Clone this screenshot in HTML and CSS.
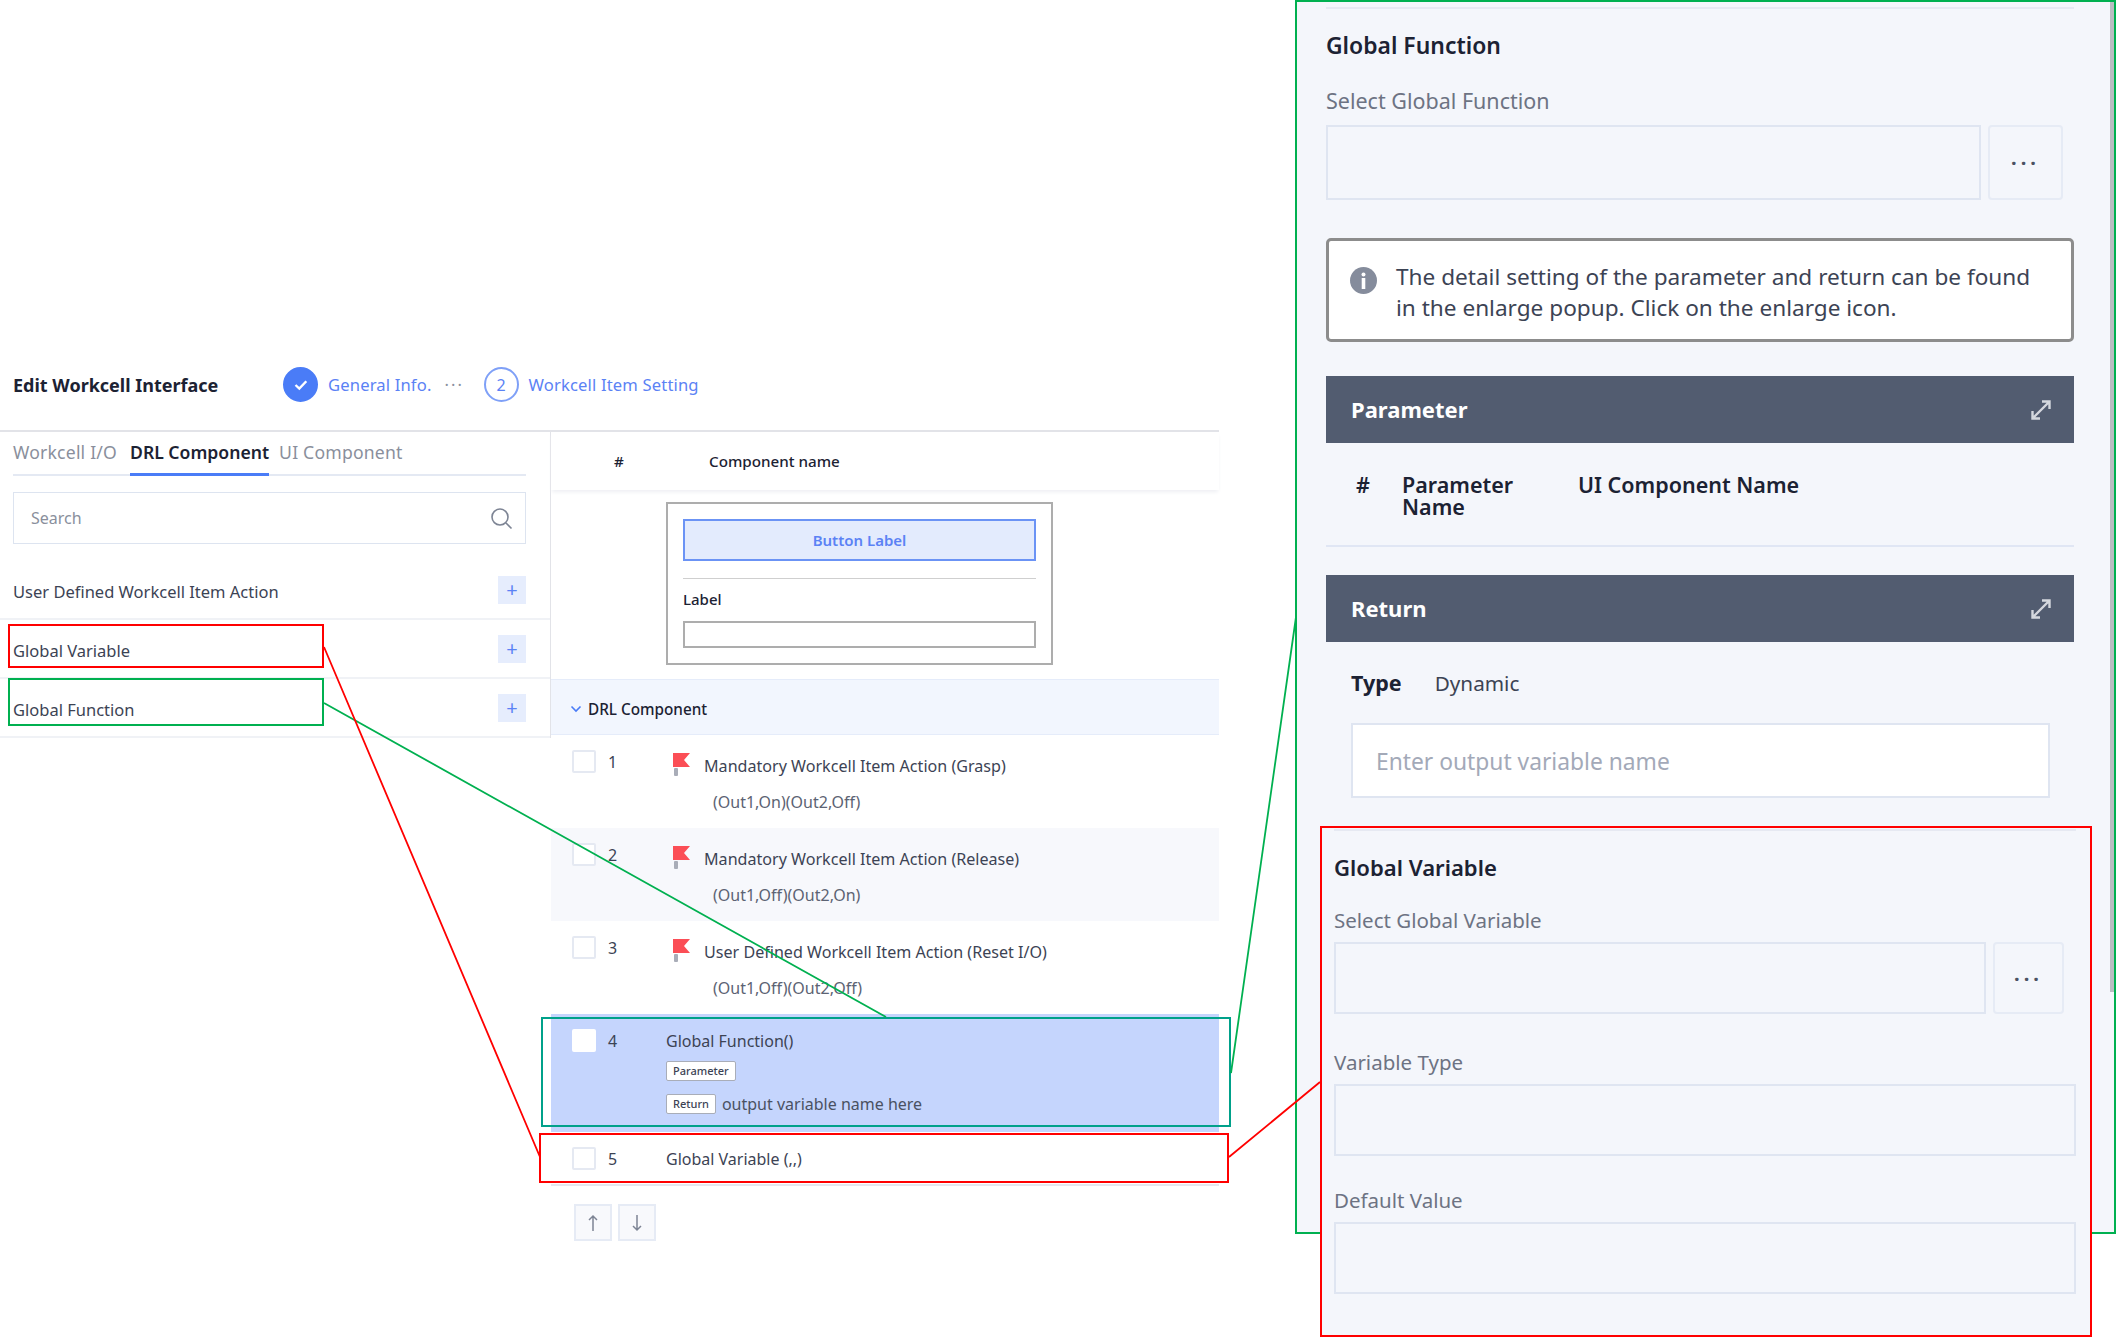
FILE: index.html
```html
<!DOCTYPE html>
<html lang="en">
<head>
  <meta charset="UTF-8">
  <title>Edit Workcell Interface</title>
  <link rel="stylesheet" href="styles.css">
</head>
<body>
  <div class="canvas">
    <div class="app">
      <header class="app-head">
        <h1>Edit Workcell Interface</h1>
        <div class="steps">
          <span class="step-dot done">
            <svg width="16" height="12" viewBox="0 0 16 12"><path d="M2.5 6l3.8 3.6 7-7.4" fill="none" stroke="#fff" stroke-width="2.4"/></svg>
          </span>
          <span class="step-label">General Info.</span>
          <span class="step-more">···</span>
          <span class="step-dot">2</span>
          <span class="step-label">Workcell Item Setting</span>
        </div>
      </header>

      <div class="app-body">
        <aside class="sidebar">
          <div class="tabs">
            <span class="tab">Workcell I/O</span>
            <span class="tab active">DRL Component</span>
            <span class="tab">UI Component</span>
          </div>
          <div class="search">
            <span>Search</span>
            <svg width="23" height="23" viewBox="0 0 23 23"><circle cx="10" cy="10" r="8" fill="none" stroke="#7d8494" stroke-width="1.6"/><path d="M16 16l5.5 5.5" stroke="#7d8494" stroke-width="1.6"/></svg>
          </div>
          <ul class="comp-list">
            <li><span>User Defined Workcell Item Action</span><button class="plus">+</button></li>
            <li><span>Global Variable</span><button class="plus">+</button></li>
            <li><span>Global Function</span><button class="plus">+</button></li>
          </ul>
        </aside>

        <main class="table">
          <div class="table-head"><span class="head-num">#</span><span>Component name</span></div>

          <div class="ui-box">
            <div class="ui-button">Button Label</div>
            <div class="ui-rule"></div>
            <div class="ui-label">Label</div>
            <div class="ui-input"></div>
          </div>

          <div class="group">
            <svg width="12" height="8" viewBox="0 0 12 8"><path d="M1.5 1.5L6 6l4.5-4.5" fill="none" stroke="#4a7cf7" stroke-width="1.6"/></svg>
            <span>DRL Component</span>
          </div>

          <div class="row">
            <span class="check"></span>
            <span class="num">1</span>
            <div>
              <div class="flagged">
                <svg class="flag" width="18" height="24" viewBox="0 0 18 24"><rect x="1" y="15" width="4" height="8" rx="1" fill="#a9adb8"/><path d="M0 0h17l-6 7 6 7H0z" fill="#fb4e56"/></svg>
                <span>Mandatory Workcell Item Action (Grasp)</span>
              </div>
              <div class="sub">(Out1,On)(Out2,Off)</div>
            </div>
          </div>
          <div class="row alt">
            <span class="check"></span>
            <span class="num">2</span>
            <div>
              <div class="flagged">
                <svg class="flag" width="18" height="24" viewBox="0 0 18 24"><rect x="1" y="15" width="4" height="8" rx="1" fill="#a9adb8"/><path d="M0 0h17l-6 7 6 7H0z" fill="#fb4e56"/></svg>
                <span>Mandatory Workcell Item Action (Release)</span>
              </div>
              <div class="sub">(Out1,Off)(Out2,On)</div>
            </div>
          </div>
          <div class="row">
            <span class="check"></span>
            <span class="num">3</span>
            <div>
              <div class="flagged">
                <svg class="flag" width="18" height="24" viewBox="0 0 18 24"><rect x="1" y="15" width="4" height="8" rx="1" fill="#a9adb8"/><path d="M0 0h17l-6 7 6 7H0z" fill="#fb4e56"/></svg>
                <span>User Defined Workcell Item Action (Reset I/O)</span>
              </div>
              <div class="sub">(Out1,Off)(Out2,Off)</div>
            </div>
          </div>
          <div class="row selected">
            <span class="check"></span>
            <span class="num">4</span>
            <div>
              <div class="fn-name">Global Function()</div>
              <div class="fn-line"><span class="badge">Parameter</span></div>
              <div class="fn-line"><span class="badge">Return</span><span class="fn-note">output variable name here</span></div>
            </div>
          </div>
          <div class="row last">
            <span class="check"></span>
            <span class="num">5</span>
            <div class="fn-name">Global Variable (,,)</div>
          </div>

          <div class="move">
            <button><svg width="12" height="18" viewBox="0 0 12 18"><path d="M6 17V2M2 6l4-4 4 4" fill="none" stroke="#7d8494" stroke-width="1.5"/></svg></button>
            <button><svg width="12" height="18" viewBox="0 0 12 18"><path d="M6 1v15M2 12l4 4 4-4" fill="none" stroke="#7d8494" stroke-width="1.5"/></svg></button>
          </div>
        </main>
      </div>
    </div>

    <section class="panel fn-panel">
      <div class="panel-top"></div>
      <h2>Global Function</h2>
      <div class="field-label first">Select Global Function</div>
      <div class="picker">
        <div class="box"></div>
        <button class="more">···</button>
      </div>

      <div class="notice">
        <svg width="27" height="27" viewBox="0 0 27 27"><circle cx="13.5" cy="13.5" r="13.5" fill="#858c9c"/><circle cx="13.5" cy="7.5" r="2" fill="#fff"/><rect x="11.7" y="11" width="3.6" height="11" fill="#fff"/></svg>
        <p>The detail setting of the parameter and return can be found in the enlarge popup. Click on the enlarge icon.</p>
      </div>

      <div class="bar">
        <span>Parameter</span>
        <svg width="22" height="22" viewBox="0 0 22 22"><path d="M3 19L19 3M12 2.5h7.5V10M2.5 12v7.5H10" fill="none" stroke="#d5d8de" stroke-width="2.4"/></svg>
      </div>
      <div class="param-head">
        <span class="param-num">#</span>
        <span class="param-name">Parameter Name</span>
        <span>UI Component Name</span>
      </div>

      <div class="bar">
        <span>Return</span>
        <svg width="22" height="22" viewBox="0 0 22 22"><path d="M3 19L19 3M12 2.5h7.5V10M2.5 12v7.5H10" fill="none" stroke="#d5d8de" stroke-width="2.4"/></svg>
      </div>
      <div class="return-type"><b>Type</b><span>Dynamic</span></div>
      <div class="return-input">Enter output variable name</div>

      <div class="scroll-thumb"></div>
    </section>

    <section class="panel var-panel">
      <div class="panel-top"></div>
      <h2>Global Variable</h2>
      <div class="field-label first">Select Global Variable</div>
      <div class="picker">
        <div class="box"></div>
        <button class="more">···</button>
      </div>
      <div class="field-label">Variable Type</div>
      <div class="box"></div>
      <div class="field-label tight">Default Value</div>
      <div class="box"></div>
    </section>

    <!-- callouts drawn over the screenshot -->
    <div class="mark red" style="left:8px;top:624px;width:316px;height:44px"></div>
    <div class="mark green" style="left:8px;top:678px;width:316px;height:48px"></div>
    <div class="mark teal" style="left:541px;top:1017px;width:690px;height:110px"></div>
    <div class="mark red" style="left:539px;top:1133px;width:690px;height:50px"></div>
    <svg class="links" width="2117" height="1337" viewBox="0 0 2117 1337">
      <path d="M324 703L886 1017M1231 1073L1296 617" fill="none" stroke="#00b050" stroke-width="1.8"/>
      <path d="M324 647L540 1157M1229 1157L1320 1082" fill="none" stroke="#f00" stroke-width="1.8"/>
    </svg>
  </div>
</body>
</html>
```

FILE: styles.css
```css
* {
  box-sizing: border-box;
  font-family: "Noto Sans", "Noto Sans CJK KR", sans-serif;
}

body {
  margin: 0;
  background-color: white;
  color: #3c4354;
}

button {
  padding: 0;
  border: none;
  background: none;
}

.canvas {
  position: relative;
  display: flex;
  align-items: flex-start;
  width: 2117px;
  height: 1337px;
  overflow: hidden;
}

.app {
  width: 1219px;
  padding-top: 368px;
}

.app-head {
  display: flex;
  align-items: center;
  height: 64px;
  padding: 0 0 29px 13px;
  border-bottom: 2px solid #e2e3e8;

  h1 {
    width: 270px;
    margin: 0;
    font-size: 18px;
    font-weight: 700;
    color: #1c2233;
  }
}

.steps {
  display: flex;
  align-items: center;
  color: #5b82f5;
  font-size: 16.6px;
}

.step-dot {
  display: flex;
  align-items: center;
  justify-content: center;
  width: 35px;
  height: 35px;
  margin-right: 10px;
  border: 2px solid #7fa0f7;
  border-radius: 50%;
  font-size: 16px;

  &.done {
    border-color: #4a7cf7;
    background-color: #4a7cf7;
  }
}

.step-label {
  line-height: 35px;
  letter-spacing: 0.15px;
}

.step-more {
  width: 52px;
  padding-left: 13px;
  color: #8a90a0;
  letter-spacing: 2px;
}

.app-body {
  display: flex;
  align-items: flex-start;
}

.sidebar {
  width: 551px;
  border-right: 1px solid #e2e3e8;
}

.tabs {
  display: flex;
  gap: 13px;
  height: 44px;
  margin: 0 24px 0 13px;
  border-bottom: 2px solid #e4e9f3;
}

.tab {
  height: 44px;
  padding-top: 8px;
  font-size: 17.6px;
  letter-spacing: 0.2px;
  color: #8a8f9c;

  &.active {
    margin-right: -3px;
    border-bottom: 3px solid #4a7cf7;
    color: #1c2233;
    font-weight: 600;
    letter-spacing: 0;
  }
}

.search {
  display: flex;
  align-items: center;
  justify-content: space-between;
  height: 52px;
  margin: 16px 24px 17px 13px;
  padding: 0 12px 0 17px;
  border: 1px solid #dde4f0;
  color: #8a8f9c;
  font-size: 16px;
}

.comp-list {
  margin: 0;
  padding: 0;
  list-style: none;

  li {
    display: flex;
    align-items: center;
    justify-content: space-between;
    height: 59px;
    padding: 1px 24px 0 13px;
    border-bottom: 2px solid #f0f2f6;
    font-size: 16.5px;

    span {
      padding-top: 2px;
    }
  }
}

.plus {
  width: 28px;
  height: 28px;
  background-color: #e6edfd;
  color: #5b82f5;
  font-size: 20px;
  line-height: 26px;
}

.table {
  flex: 1;
}

.table-head {
  display: flex;
  align-items: center;
  height: 58px;
  box-shadow: 0 3px 4px -1px #eeeff3;
  color: #1c2233;
  font-size: 15.2px;
  font-weight: 500;
}

.head-num {
  width: 158px;
  padding-left: 63px;
}

.ui-box {
  width: 387px;
  height: 163px;
  margin: 12px 0 14px 115px;
  padding: 15px 15px 0;
  border: 2px solid #adadad;
}

.ui-button {
  height: 42px;
  border: 2px solid #6b93f5;
  background-color: #e3ebfd;
  color: #5b82f5;
  font-size: 15px;
  font-weight: 600;
  line-height: 38px;
  text-align: center;
}

.ui-rule {
  height: 1px;
  margin-top: 17px;
  background-color: #cfcfcf;
}

.ui-label {
  height: 42px;
  padding-top: 10px;
  color: #1c2233;
  font-size: 15px;
  font-weight: 500;
}

.ui-input {
  height: 27px;
  border: 2px solid #adadad;
}

.group {
  display: flex;
  align-items: center;
  gap: 6px;
  height: 56px;
  padding: 3px 0 0 19px;
  border-top: 1px solid #e5ecfa;
  border-bottom: 1px solid #e5ecfa;
  background-color: #f2f6fe;
  color: #1c2233;
  font-size: 15.3px;
  font-weight: 500;
}

.row {
  display: grid;
  grid-template-columns: 24px 70px 1fr;
  height: 93px;
  padding: 15px 0 0 21px;
  font-size: 16px;

  &.alt {
    background-color: #f7f8fc;
  }

  &.selected {
    height: 118px;
    background-color: #c5d5fd;

    .check {
      border-color: white;
      background-color: white;
    }
  }

  &.last {
    height: 54px;
    border-bottom: 2px solid #e5e7ee;
  }
}

.check {
  width: 24px;
  height: 23px;
  border: 2px solid #e5e9f2;
  border-radius: 2px;
  background-color: white;
}

.num {
  padding-left: 12px;
  line-height: 24px;
}

.flagged {
  display: flex;
  align-items: flex-start;
  padding-left: 7px;
  line-height: 24px;
  padding-top: 4px;

  span {
    margin-left: 13px;
    font-size: 16.1px;
  }
}

.flag {
  flex: none;
  margin-top: -1px;
}

.sub {
  padding-top: 12px;
  padding-left: 47px;
  line-height: 24px;
  color: #5c6373;
}

.fn-name {
  line-height: 24px;
}

.fn-line {
  display: flex;
  align-items: center;
  gap: 6px;
  height: 20px;
  margin-top: 8px;

  & + .fn-line {
    margin-top: 13px;
  }
}

.badge {
  height: 20px;
  padding: 0 6px;
  border: 1px solid #a9adb8;
  border-radius: 2px;
  background-color: white;
  font-size: 11px;
  font-weight: 500;
  line-height: 18px;
}

.fn-note {
  color: #4a5162;
}

.move {
  display: flex;
  gap: 6px;
  margin: 18px 0 0 23px;

  button {
    width: 38px;
    height: 37px;
    padding-top: 4px;
    border: 2px solid #e6ebf5;
    background-color: #f8f9fc;
  }
}

.panel {
  background-color: #f4f6fb;

  h2 {
    margin: 0;
    color: #1c2233;
    font-weight: 600;
  }
}

.panel-top {
  height: 2px;
  background-color: #e6e9f2;
}

.box {
  flex: 1;
  height: 72px;
  border: 2px solid #dfe5f1;
}

.field-label {
  color: #6d7383;
  line-height: 26px;
}

.picker {
  display: flex;
  gap: 7px;
}

.more {
  border: 2px solid #e6ebf5;
  border-radius: 4px;
  color: #4a5162;
  font-size: 20px;
  font-weight: 700;
  letter-spacing: 4px;
}

.fn-panel {
  position: relative;
  width: 821px;
  height: 1234px;
  margin-left: 76px;
  padding: 5px 40px 0 29px;
  border: 2px solid #00b050;

  h2 {
    margin-top: 23px;
    font-size: 22.9px;
    line-height: 28px;
  }

  .first {
    margin-top: 28px;
    margin-bottom: 11px;
    font-size: 21.5px;
  }

  .picker .box {
    height: 75px;
  }

  .more {
    width: 75px;
    margin-right: 11px;
  }
}

.notice {
  display: flex;
  gap: 19px;
  height: 104px;
  margin-top: 38px;
  padding: 20px 20px 0 21px;
  border: 3px solid #8c8c8c;
  border-radius: 5px;
  background-color: white;

  svg {
    flex: none;
    margin-top: 6px;
  }

  p {
    width: 640px;
    margin: 0;
    color: #3c4354;
    font-size: 22.6px;
    line-height: 31px;
  }
}

.bar {
  display: flex;
  align-items: center;
  justify-content: space-between;
  height: 67px;
  margin-top: 34px;
  padding: 0 22px 2px 25px;
  background-color: #525c70;
  color: white;
  font-size: 22px;
  font-weight: 700;

  svg {
    margin-top: 2px;
  }
}

.param-head {
  display: flex;
  height: 104px;
  padding-top: 31px;
  border-bottom: 2px solid #e0e6f4;
  color: #1c2233;
  font-size: 21.5px;
  font-weight: 600;
  line-height: 22px;
}

.param-num {
  width: 76px;
  padding-left: 30px;
}

.param-name {
  width: 176px;
  padding-right: 50px;
}

.param-head + .bar {
  margin-top: 28px;
}

.return-type {
  display: flex;
  gap: 33px;
  margin-top: 27px;
  padding-left: 25px;
  font-size: 20.7px;
  line-height: 28px;

  b {
    color: #1c2233;
    font-size: 21.5px;
  }
}

.return-input {
  height: 75px;
  margin: 26px 24px 0 25px;
  padding-left: 23px;
  border: 2px solid #dfe5f1;
  background-color: white;
  color: #a3a9b8;
  font-size: 22.8px;
  line-height: 74px;
}

.scroll-thumb {
  position: absolute;
  top: 0;
  right: 0;
  width: 4px;
  height: 990px;
  background-color: #bbbdc3;
}

.var-panel {
  position: absolute;
  left: 1320px;
  top: 826px;
  width: 772px;
  height: 511px;
  padding: 1px 14px 0 12px;
  border: 2px solid red;

  h2 {
    margin-top: 22px;
    font-size: 22.1px;
    line-height: 28px;
  }

  .field-label {
    height: 26px;
    font-size: 20.5px;
  }

  .first {
    margin-top: 26px;
    margin-bottom: 9px;
  }

  .field-label:not(.first) {
    margin-top: 35px;
    margin-bottom: 9px;
  }

  .field-label.tight {
    margin-top: 31px;
  }

  .box {
    height: 72px;
  }

  .more {
    width: 71px;
    margin-right: 12px;
  }
}

.mark {
  position: absolute;
  border: 2px solid;

  &.red {
    border-color: red;
  }

  &.green {
    border-color: #00b050;
  }

  &.teal {
    border-color: #00a18a;
  }
}

.links {
  position: absolute;
  left: 0;
  top: 0;
  pointer-events: none;
}
```
